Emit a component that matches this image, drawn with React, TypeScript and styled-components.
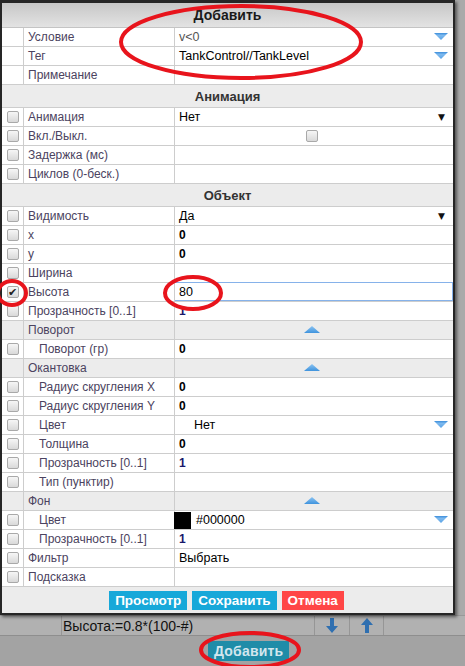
import styled, { createGlobalStyle } from 'styled-components';

type Value =
  | { kind: 'text'; text: string; muted?: boolean; pad?: number }
  | { kind: 'dropdown'; text: string; muted?: boolean; pad?: number; swatch?: boolean }
  | { kind: 'select'; text: string }
  | { kind: 'check' }
  | { kind: 'input'; text: string }
  | { kind: 'none' };

type Item =
  | { type: 'row'; label: string; check?: boolean; checked?: boolean; indent?: boolean; value: Value }
  | { type: 'section'; title: string }
  | { type: 'sub'; title: string };

const items: Item[] = [
  { type: 'row', label: 'Условие', value: { kind: 'dropdown', text: 'v<0', muted: true } },
  { type: 'row', label: 'Тег', value: { kind: 'dropdown', text: 'TankControl//TankLevel' } },
  { type: 'row', label: 'Примечание', value: { kind: 'none' } },
  { type: 'section', title: 'Анимация' },
  { type: 'row', check: true, label: 'Анимация', value: { kind: 'select', text: 'Нет' } },
  { type: 'row', check: true, label: 'Вкл./Выкл.', value: { kind: 'check' } },
  { type: 'row', check: true, label: 'Задержка (мс)', value: { kind: 'none' } },
  { type: 'row', check: true, label: 'Циклов (0-беск.)', value: { kind: 'none' } },
  { type: 'section', title: 'Объект' },
  { type: 'row', check: true, label: 'Видимость', value: { kind: 'select', text: 'Да' } },
  { type: 'row', check: true, label: 'x', value: { kind: 'text', text: '0' } },
  { type: 'row', check: true, label: 'y', value: { kind: 'text', text: '0' } },
  { type: 'row', check: true, label: 'Ширина', value: { kind: 'none' } },
  { type: 'row', check: true, checked: true, label: 'Высота', value: { kind: 'input', text: '80' } },
  { type: 'row', check: true, label: 'Прозрачность [0..1]', value: { kind: 'text', text: '1' } },
  { type: 'sub', title: 'Поворот' },
  { type: 'row', check: true, indent: true, label: 'Поворот (гр)', value: { kind: 'text', text: '0' } },
  { type: 'sub', title: 'Окантовка' },
  { type: 'row', check: true, indent: true, label: 'Радиус скругления X', value: { kind: 'text', text: '0' } },
  { type: 'row', check: true, indent: true, label: 'Радиус скругления Y', value: { kind: 'text', text: '0' } },
  { type: 'row', check: true, indent: true, label: 'Цвет', value: { kind: 'dropdown', text: 'Нет', pad: 19 } },
  { type: 'row', check: true, indent: true, label: 'Толщина', value: { kind: 'text', text: '0' } },
  { type: 'row', check: true, indent: true, label: 'Прозрачность [0..1]', value: { kind: 'text', text: '1' } },
  { type: 'row', check: true, indent: true, label: 'Тип (пунктир)', value: { kind: 'none' } },
  { type: 'sub', title: 'Фон' },
  { type: 'row', check: true, indent: true, label: 'Цвет', value: { kind: 'dropdown', text: '#000000', swatch: true } },
  { type: 'row', check: true, indent: true, label: 'Прозрачность [0..1]', value: { kind: 'text', text: '1' } },
  { type: 'row', check: true, label: 'Фильтр', value: { kind: 'text', text: 'Выбрать' } },
  { type: 'row', check: true, label: 'Подсказка', value: { kind: 'none' } },
];

const GlobalStyle = createGlobalStyle`
  html, body {
    margin: 0;
    padding: 0;
    background: #a9a9a9;
  }
  * {
    box-sizing: border-box;
  }
`;

const Page = styled.div`
  position: relative;
  width: 465px;
  height: 666px;
  overflow: hidden;
  background: #aaaaaa;
  display: flex;
  flex-direction: column;
  justify-content: flex-end;
  font-family: 'Liberation Sans', Arial, sans-serif;
`;

const BehindRow = styled.div`
  height: 21px;
  display: grid;
  grid-template-columns: 62px 253px 35px 34px 1fr;
  border-top: 1px solid #999;
  border-bottom: 1px solid #8e8e8e;
  background: #b1b1b1;

  & > div {
    border-right: 1px solid #969696;
    display: flex;
    align-items: center;
    justify-content: center;
  }

  & > div:last-child {
    border-right: none;
  }

  .formula {
    justify-content: flex-start;
    padding-left: 1px;
    font-size: 14px;
    color: #111;
  }
`;

const Footer = styled.div`
  height: 30px;
  background: #a3a3a3;
  display: flex;
  align-items: center;
  padding-left: 208px;
`;

const AddButton = styled.button`
  height: 20px;
  padding: 0 6px;
  border: none;
  background: #1f8ca8;
  color: #d2e6ee;
  font-family: 'Liberation Sans', Arial, sans-serif;
  font-weight: bold;
  font-size: 14px;
  letter-spacing: 0.2px;
`;

const Dialog = styled.div`
  position: absolute;
  top: 0;
  left: 0;
  width: 455px;
  border: 2px solid #262626;
  border-top-width: 3px;
  background: #fff;
  box-shadow: 2px 2px 3px rgba(0, 0, 0, 0.5);
  z-index: 1;
`;

const Header = styled.div`
  height: 25px;
  display: flex;
  align-items: center;
  justify-content: center;
  background: linear-gradient(#c7c7c7, #e3e3e3);
  border-bottom: 1px solid #c4c4c4;
  font-weight: bold;
  font-size: 14px;
  color: #1a1a1a;
`;

const Row = styled.div<{ $shade?: boolean; $h?: number }>`
  height: ${(p) => p.$h ?? 19}px;
  display: grid;
  grid-template-columns: 22px 151px 1fr;
  border-bottom: 1px solid #cdcdcd;
  background: ${(p) => (p.$shade ? '#ececec' : '#fff')};
`;

const Cell = styled.div`
  display: flex;
  align-items: center;
  border-right: 1px solid #cdcdcd;
  min-width: 0;
  position: relative;
`;

const CheckCell = styled(Cell)`
  justify-content: center;
`;

const Label = styled(Cell)<{ $indent?: boolean }>`
  padding-left: ${(p) => (p.$indent ? 15 : 4)}px;
  font-size: 12px;
  color: #4b4360;
  white-space: nowrap;
`;

const SubTitle = styled(Label)`
  color: #4b4360;
`;

const ValueCell = styled.div<{ $pad?: number; $muted?: boolean; $center?: boolean }>`
  display: flex;
  align-items: center;
  justify-content: ${(p) => (p.$center ? 'center' : 'flex-start')};
  position: relative;
  padding-left: ${(p) => p.$pad ?? 4}px;
  padding-right: 5px;
  font-size: 12.5px;
  color: ${(p) => (p.$muted ? '#555' : '#000')};
  white-space: nowrap;
`;

const ValueText = styled.span`
  flex: 1;
`;

const NumText = styled.span<{ $blue?: boolean }>`
  flex: 1;
  font-weight: bold;
  font-size: 12px;
  color: ${(p) => (p.$blue ? '#18186a' : '#000')};
`;

const Swatch = styled.span`
  width: 17px;
  height: 17px;
  background: #000;
  margin-right: 5px;
  margin-left: -5px;
`;

const Input = styled.div`
  width: 100%;
  height: 19px;
  margin-top: -1px;
  display: flex;
  align-items: center;
  padding-left: 4px;
  border: 1px solid #86b2ea;
  font-size: 12.5px;
  color: #000;
`;

const InputValueCell = styled.div`
  display: flex;
  align-items: center;
  margin-left: -1px;
`;

const SectionRow = styled.div`
  height: 23px;
  display: flex;
  align-items: center;
  justify-content: center;
  background: #ececec;
  border-bottom: 1px solid #cdcdcd;
  font-weight: bold;
  font-size: 13px;
  color: #333;
`;

const Box = styled.span<{ $checked?: boolean }>`
  width: 12px;
  height: 12px;
  border: 1px solid #a9a9a9;
  border-radius: 2px;
  background: linear-gradient(#f6f6f6, #d9d9d9);
  display: flex;
  align-items: center;
  justify-content: center;
  font-size: 11px;
  line-height: 1;
  color: #222;
  font-family: 'DejaVu Sans', sans-serif;
`;

const SelectArrow = styled.span`
  font-size: 9px;
  color: #111;
  margin-right: 3px;
  font-family: 'DejaVu Sans', sans-serif;
`;

const ButtonBar = styled.div`
  height: 26px;
  display: flex;
  align-items: center;
  justify-content: center;
  gap: 5px;
  background: #ececec;
  padding-right: 2px;
`;

const ActionButton = styled.button<{ $danger?: boolean }>`
  height: 19px;
  padding: 0 6px;
  border: none;
  background: ${(p) => (p.$danger ? '#ff4646' : '#17a8d9')};
  color: #fff;
  font-family: 'Liberation Sans', Arial, sans-serif;
  font-weight: bold;
  font-size: 13.5px;
`;

const Marks = styled.svg`
  position: absolute;
  inset: 0;
  z-index: 2;
  pointer-events: none;
`;

function DownTri() {
  return (
    <svg width="14" height="8" viewBox="0 0 14 8">
      <defs>
        <linearGradient id="dg" x1="0" y1="0" x2="0" y2="1">
          <stop offset="0" stopColor="#3d8edb" />
          <stop offset="0.35" stopColor="#7db9ee" />
          <stop offset="1" stopColor="#5aa3e6" />
        </linearGradient>
      </defs>
      <polygon points="0,0 14,0 7,7" fill="url(#dg)" />
    </svg>
  );
}

function UpTri() {
  return (
    <svg width="16" height="8" viewBox="0 0 16 8">
      <defs>
        <linearGradient id="ug" x1="0" y1="0" x2="0" y2="1">
          <stop offset="0" stopColor="#8cc4f2" />
          <stop offset="1" stopColor="#3f93dd" />
        </linearGradient>
      </defs>
      <polygon points="8,0 16,7 0,7" fill="url(#ug)" />
    </svg>
  );
}

function Arrow({ up }: { up?: boolean }) {
  return (
    <svg width="12" height="15" viewBox="0 0 12 15" style={{ transform: up ? 'rotate(180deg)' : undefined }}>
      <path d="M4 0 H8 V8 H12 L6 15 L0 8 H4 Z" fill="#2f6fb0" />
    </svg>
  );
}

function renderValue(v: Value) {
  switch (v.kind) {
    case 'text':
      return (
        <ValueCell $muted={v.muted}>
          {/^[0-9]$/.test(v.text) ? <NumText $blue={v.text === '1'}>{v.text}</NumText> : <ValueText>{v.text}</ValueText>}
        </ValueCell>
      );
    case 'dropdown':
      return (
        <ValueCell $muted={v.muted} $pad={v.pad}>
          {v.swatch && <Swatch />}
          <ValueText>{v.text}</ValueText>
          <DownTri />
        </ValueCell>
      );
    case 'select':
      return (
        <ValueCell>
          <ValueText>{v.text}</ValueText>
          <SelectArrow>▼</SelectArrow>
        </ValueCell>
      );
    case 'check':
      return (
        <ValueCell $center $pad={0}>
          <Box />
        </ValueCell>
      );
    case 'input':
      return (
        <InputValueCell>
          <Input>{v.text}</Input>
        </InputValueCell>
      );
    default:
      return <ValueCell />;
  }
}

export default function App() {
  return (
    <Page>
      <GlobalStyle />

      <BehindRow>
        <div />
        <div className="formula">Высота:=0.8*(100-#)</div>
        <div>
          <Arrow />
        </div>
        <div>
          <Arrow up />
        </div>
        <div />
      </BehindRow>
      <Footer>
        <AddButton>Добавить</AddButton>
      </Footer>

      <Dialog>
        <Header>Добавить</Header>
        {items.map((it, i) => {
          if (it.type === 'section') return <SectionRow key={i}>{it.title}</SectionRow>;
          if (it.type === 'sub')
            return (
              <Row key={i} $shade>
                <CheckCell />
                <SubTitle>{it.title}</SubTitle>
                <ValueCell $center $pad={0}>
                  <UpTri />
                </ValueCell>
              </Row>
            );
          return (
            <Row key={i}>
              <CheckCell>{it.check && <Box $checked={it.checked}>{it.checked ? '✔' : ''}</Box>}</CheckCell>
              <Label $indent={it.indent}>{it.label}</Label>
              {renderValue(it.value)}
            </Row>
          );
        })}
        <ButtonBar>
          <ActionButton>Просмотр</ActionButton>
          <ActionButton>Сохранить</ActionButton>
          <ActionButton $danger>Отмена</ActionButton>
        </ButtonBar>
      </Dialog>

      <Marks width="465" height="666" viewBox="0 0 465 666">
        <g fill="none" stroke="#e8141c" strokeWidth="4">
          <ellipse cx="241" cy="42" rx="120" ry="36" />
          <ellipse cx="12" cy="293" rx="14" ry="12" />
          <ellipse cx="193" cy="293" rx="28" ry="16" />
          <ellipse cx="250" cy="650" rx="49" ry="17" />
        </g>
      </Marks>
    </Page>
  );
}
